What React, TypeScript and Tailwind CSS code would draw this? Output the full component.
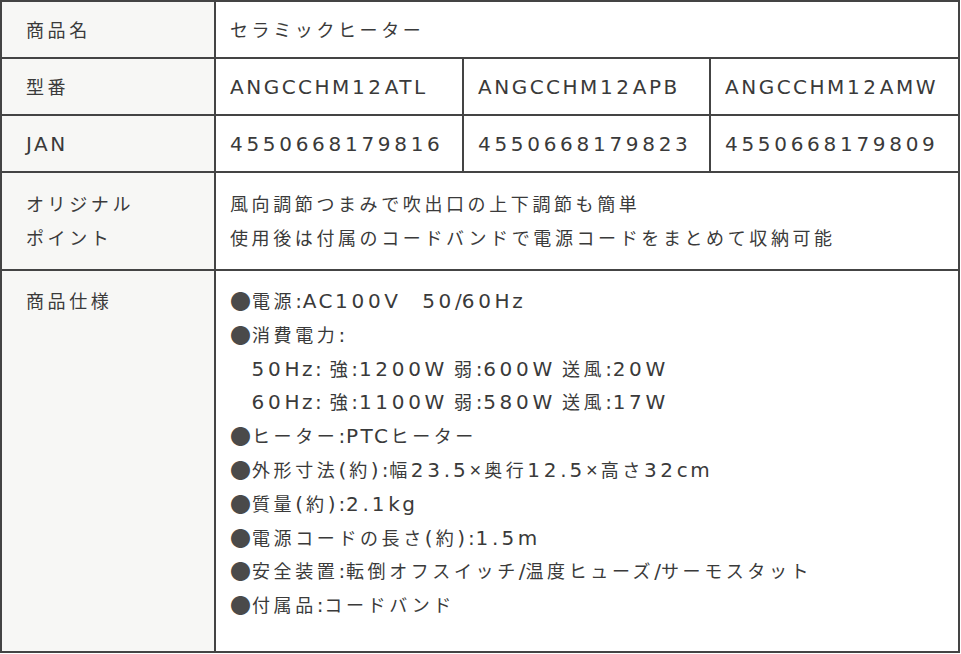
import React from "react";

type Kind = "d" | "l" | "x" | "p" | "q" | "s" | "b" | "c";

const cls: Record<Kind, string> = {
  d: "font-['DejaVu_Sans',sans-serif] text-[20px] leading-none tracking-[3.7px]",
  l: "font-['DejaVu_Sans',sans-serif] text-[20px] leading-none tracking-[2.5px]",
  x: "font-['Liberation_Sans',sans-serif] text-[20px] leading-none tracking-[3px]",
  p: "font-['DejaVu_Sans',sans-serif] text-[20px] leading-none tracking-[0.8px]",
  q: "font-['DejaVu_Sans',sans-serif] text-[20px] leading-none tracking-[3px]",
  s: "font-['DejaVu_Sans',sans-serif] text-[20px] leading-none tracking-[0px]",
  b: "text-[#4a4a4a] text-[21px] leading-none tracking-[1px] align-[-1px]",
  c: "",
};

function kindOf(ch: string): Kind {
  if (/[0-9]/.test(ch)) return "d";
  if (ch === "×") return "x";
  if (/[A-Za-z]/.test(ch)) return "l";
  if (/[().]/.test(ch)) return "q";
  if (ch === "/") return "s";
  if (/[: ]/.test(ch)) return "p";
  if (ch === "●") return "b";
  return "c";
}

function T({ s }: { s: string }) {
  const parts: { k: Kind; t: string }[] = [];
  for (const ch of s) {
    const k = kindOf(ch);
    const last = parts[parts.length - 1];
    if (last && last.k === k) last.t += ch;
    else parts.push({ k, t: ch });
  }
  return (
    <>
      {parts.map((p, i) =>
        p.k === "c" ? (
          <span key={i}>{p.t}</span>
        ) : (
          <span key={i} className={cls[p.k]}>
            {p.t}
          </span>
        )
      )}
    </>
  );
}

const label =
  "bg-[#f7f7f5] border-r-2 border-b-2 border-[#444] pl-[24px] pr-2";
const value = "bg-white border-r-2 border-b-2 border-[#444] pl-[14px] pr-2";

const specs = [
  "●電源:AC100V　50/60Hz",
  "●消費電力:",
  "　50Hz: 強:1200W 弱:600W 送風:20W",
  "　60Hz: 強:1100W 弱:580W 送風:17W",
  "●ヒーター:PTCヒーター",
  "●外形寸法(約):幅23.5×奥行12.5×高さ32cm",
  "●質量(約):2.1kg",
  "●電源コードの長さ(約):1.5m",
  "●安全装置:転倒オフスイッチ/温度ヒューズ/サーモスタット",
  "●付属品:コードバンド",
];

export default function App() {
  return (
    <div className="w-[961px] h-[654px] bg-white font-['Noto_Sans_CJK_JP',sans-serif] text-[18px] tracking-[3.6px] text-[#3a3a3a]">
      <div className="w-[960px] h-[653px] border-l-2 border-t-2 border-[#444] grid grid-cols-[214px_248px_247px_249px] grid-rows-[57px_57px_57px_98px_382px]">
        {/* Row 1 */}
        <div className={`${label} flex items-center`}>商品名</div>
        <div className={`${value} col-span-3 flex items-center`}>
          セラミックヒーター
        </div>

        {/* Row 2 */}
        <div className={`${label} flex items-center`}>型番</div>
        <div className={`${value} flex items-center`}>
          <T s="ANGCCHM12ATL" />
        </div>
        <div className={`${value} flex items-center`}>
          <T s="ANGCCHM12APB" />
        </div>
        <div className={`${value} flex items-center`}>
          <T s="ANGCCHM12AMW" />
        </div>

        {/* Row 3 */}
        <div className={`${label} flex items-center`}>
          <T s="JAN" />
        </div>
        <div className={`${value} flex items-center`}>
          <T s="4550668179816" />
        </div>
        <div className={`${value} flex items-center`}>
          <T s="4550668179823" />
        </div>
        <div className={`${value} flex items-center`}>
          <T s="4550668179809" />
        </div>

        {/* Row 4 */}
        <div className={`${label} pt-[13px] leading-[34px]`}>
          <div>オリジナル</div>
          <div>ポイント</div>
        </div>
        <div className={`${value} col-span-3 pt-[13px] leading-[34px]`}>
          <div>風向調節つまみで吹出口の上下調節も簡単</div>
          <div>使用後は付属のコードバンドで電源コードをまとめて収納可能</div>
        </div>

        {/* Row 5 */}
        <div className={`${label} pt-[13px] leading-[33.8px]`}>
          <div>商品仕様</div>
        </div>
        <div className={`${value} col-span-3 pt-[13px] leading-[33.8px]`}>
          {specs.map((s, i) => (
            <div key={i} className="whitespace-pre">
              <T s={s} />
            </div>
          ))}
        </div>
      </div>
    </div>
  );
}
